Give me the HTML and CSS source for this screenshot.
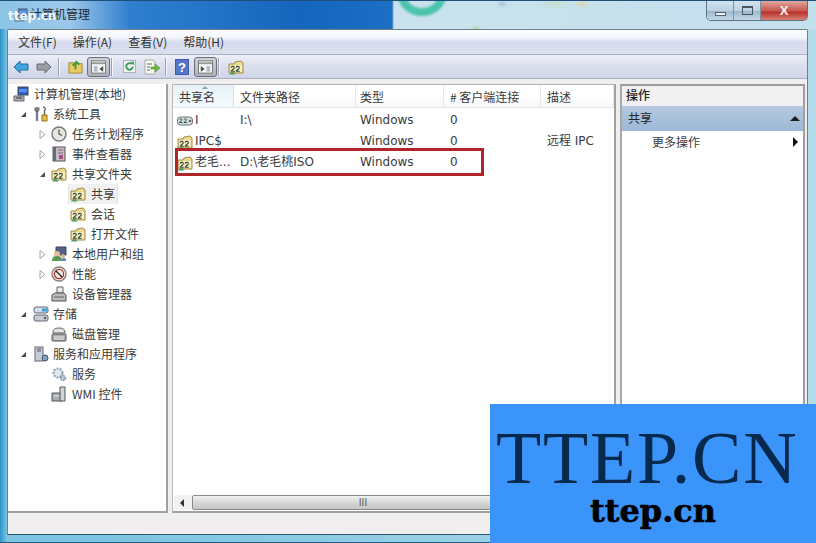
FILE: index.html
```html
<!DOCTYPE html>
<html lang="zh-CN">
<head>
<meta charset="utf-8">
<title>计算机管理</title>
<link rel="stylesheet" href="styles.css">
</head>
<body>
<svg class="defs" width="0" height="0" aria-hidden="true">
  <symbol id="share" viewBox="0 0 16 16">
    <path d="M1 5h5l1-2 6-1 2 2v10H1z" fill="#ecd890" stroke="#a58a45"/>
    <path d="M2 6h12v7H2z" fill="#f7ecc0"/>
    <path d="M3 8.500c1-1.800 3.500-1.300 3.300.400C6.100 10 3.800 11 3.300 12.300h3.500M8 8.500c1-1.800 3.500-1.300 3.300.400-.2 1.100-2.500 2.100-3 3.400h3.500" fill="none" stroke="#35483c" stroke-width="1.100"/>
    <path d="M1 15.500l3.500-3.500 3 3.500z" fill="#4f9c68"/>
  </symbol>
  <symbol id="drive" viewBox="0 0 16 16">
    <rect x="0.500" y="4" width="15" height="8" rx="3" fill="#d8dce0" stroke="#6f7478"/>
    <path d="M2.500 6.500c1-1 2.500-.8 2.500.300 0 1-2.300 1.500-2.500 2.700H5.500M7 6.500c1-1 2.500-.8 2.500.300 0 1-2.300 1.500-2.500 2.700h3" fill="none" stroke="#2f5f46"/>
    <circle cx="13" cy="8" r="1.300" fill="#666"/>
  </symbol>
  <symbol id="computer" viewBox="0 0 16 16">
    <path d="M1 10h10v5H1z" fill="#aab0b8" stroke="#666"/>
    <rect x="5" y="1" width="10" height="8" fill="#2f5fc0" stroke="#445"/>
    <path d="M6 3h8v3H6z" fill="#5b8ee8"/>
    <path d="M3 12h6" stroke="#333"/>
  </symbol>
  <symbol id="tools" viewBox="0 0 16 16">
    <path d="M4 1v14" stroke="#7b8088" stroke-width="2.400"/>
    <path d="M2 1.500c0 3 1 4 2 4s2-1 2-4" fill="none" stroke="#5c6066" stroke-width="1.200"/>
    <path d="M10 1c2 0 3 2 1.500 4v4" fill="none" stroke="#666" stroke-width="1.400"/>
    <path d="M9 9h5v6H9z" fill="#e9c23a" stroke="#8a7020"/>
  </symbol>
  <symbol id="clock" viewBox="0 0 16 16">
    <circle cx="8" cy="8" r="7" fill="#e6e6e0" stroke="#77797c" stroke-width="1.400"/>
    <path d="M8 3.500V8l3 1.500" fill="none" stroke="#444" stroke-width="1.100"/>
  </symbol>
  <symbol id="log" viewBox="0 0 16 16">
    <rect x="2" y="1" width="12" height="14" fill="#c9bcc0" stroke="#555"/>
    <path d="M2 1h3v14H2z" fill="#5f6e84"/>
    <path d="M7 4h5M7 7h5" stroke="#7b6a70"/>
    <rect x="8" y="9" width="4" height="4" fill="#b04a8a"/>
  </symbol>
  <symbol id="users" viewBox="0 0 16 16">
    <path d="M5 1h10v8H5z" fill="#54628a" stroke="#3a4258"/>
    <circle cx="6" cy="8" r="3" fill="#e4be96"/>
    <path d="M1 15c0-4 2-5 5-5s5 1 5 5z" fill="#5c9a56"/>
    <circle cx="12" cy="10" r="2" fill="#d8b08a"/>
    <path d="M10 15c0-2 1-3 3-3s2 1 2 3z" fill="#6684c4"/>
  </symbol>
  <symbol id="perf" viewBox="0 0 16 16">
    <circle cx="8" cy="8" r="7" fill="#f1ece6" stroke="#8a7c78" stroke-width="1.400"/>
    <circle cx="8" cy="8" r="4.600" fill="none" stroke="#a8322c" stroke-width="1.200"/>
    <path d="M5 5l6 6" stroke="#222" stroke-width="1.200"/>
  </symbol>
  <symbol id="device" viewBox="0 0 16 16">
    <path d="M6 1h6v6H6z" fill="#e8eaec" stroke="#666"/>
    <path d="M1 9l3-2h9l2 2v6H1z" fill="#b8bcc0" stroke="#555"/>
    <path d="M3 11h10" stroke="#666"/>
  </symbol>
  <symbol id="storage" viewBox="0 0 16 16">
    <rect x="1" y="1" width="14" height="6" rx="2" fill="#cfe0ea" stroke="#667"/>
    <rect x="9" y="2.500" width="5" height="3" fill="#3aa0d8"/>
    <rect x="1" y="9" width="14" height="6" rx="2" fill="#c8ccd0" stroke="#667"/>
    <circle cx="12" cy="12" r="1.200" fill="#555"/>
  </symbol>
  <symbol id="disk" viewBox="0 0 16 16">
    <path d="M2 6c0-3 3-4 6-4s6 1 6 4v1H2z" fill="#dfe1e3" stroke="#666"/>
    <rect x="1" y="8" width="14" height="7" rx="1" fill="#a8acb0" stroke="#555"/>
    <path d="M3 11h10M3 13h10" stroke="#e8e8e8"/>
  </symbol>
  <symbol id="server" viewBox="0 0 16 16">
    <rect x="2" y="1" width="8" height="14" fill="#c8ccd4" stroke="#667"/>
    <path d="M4 3h4M4 5h4" stroke="#556"/>
    <circle cx="12" cy="12" r="3" fill="#7ea4c8" stroke="#456"/>
  </symbol>
  <symbol id="gear" viewBox="0 0 16 16">
    <circle cx="7" cy="7" r="4.500" fill="#dfe8ef" stroke="#8aa0b0" stroke-width="2" stroke-dasharray="2 1.200"/>
    <circle cx="12" cy="12" r="2.600" fill="#b8c4cc" stroke="#667" stroke-dasharray="1.500 1"/>
  </symbol>
  <symbol id="wmi" viewBox="0 0 16 16">
    <path d="M1 7h10v8H1z" fill="#a8acb0" stroke="#555"/>
    <path d="M9 1h5v14H9z" fill="#d0d4d8" stroke="#555"/>
    <path d="M3 10h5" stroke="#eee"/>
  </symbol>
  <symbol id="arrow-open" viewBox="0 0 7 7"><path d="M6 1v5H1z" fill="#4c4c4c"/></symbol>
  <symbol id="arrow-closed" viewBox="0 0 7 9"><path d="M1 .5l5 4-5 4z" fill="#fff" stroke="#a6a6a6"/></symbol>
</svg>

<div class="window">
  <header class="titlebar">
    <svg class="title-icon"><use href="#computer"/></svg>
    <span class="title-text">计算机管理</span>
    <div class="blur-strip"><span class="teal"></span></div>
    <div class="caption">
      <button class="cap cap-min"><i></i></button>
      <button class="cap cap-max"><i></i></button>
      <button class="cap cap-close">X</button>
    </div>
  </header>

  <div class="client">
    <nav class="menubar">
      <span>文件(F)</span><span>操作(A)</span><span>查看(V)</span><span>帮助(H)</span>
    </nav>
    <div class="toolbar">
      <svg class="tb tb-nav" viewBox="0 0 16 14"><path d="M1 7l6-6v3h8v6H7v3z" fill="#3fa6e0" stroke="#1f6f9f"/></svg>
      <svg class="tb tb-nav" viewBox="0 0 16 14"><path d="M15 7L9 1v3H1v6h8v3z" fill="#9a9ea2" stroke="#6a6e72"/></svg>
      <i class="sep"></i>
      <svg class="tb tb-up" viewBox="0 0 16 16"><path d="M1 4h5l1 1h8v10H1z" fill="#e9c95e" stroke="#a4862f"/><path d="M8 11V5M5 7l4-4 3 3" fill="none" stroke="#3c9a3c" stroke-width="2"/></svg>
      <span class="tb-box"><svg viewBox="0 0 16 14"><rect x=".5" y=".5" width="15" height="13" fill="#f6f6f6" stroke="#777"/><path d="M1 3h14" stroke="#999" stroke-width="2"/><path d="M3 6h4v6H3z" fill="#b8bec6"/><path d="M13 6v6l-4-3z" fill="#444"/></svg></span>
      <i class="sep"></i>
      <svg class="tb tb-refresh" viewBox="0 0 16 16"><rect x="1.500" y="1.500" width="13" height="13" fill="#eef3ee" stroke="#aab"/><path d="M11.500 8a3.500 3.500 0 1 1-1-2.500" fill="none" stroke="#3c9a5c" stroke-width="2"/><path d="M9 3h4v4z" fill="#3c9a5c"/></svg>
      <svg class="tb tb-export" viewBox="0 0 17 16"><path d="M2 1h8l2 2v12H2z" fill="#f7f7ee" stroke="#aaa"/><path d="M4 5h5M4 8h3M4 11h3" stroke="#667"/><path d="M8 8h4V5l5 4-5 4v-3H8z" fill="#6cb83c" stroke="#3f8a20" stroke-width=".5"/></svg>
      <i class="sep"></i>
      <svg class="tb tb-help" viewBox="0 0 14 16"><rect width="14" height="16" fill="#3a5ab0"/><rect x="1" y="1" width="12" height="14" fill="#5576c8"/><text x="7" y="13" class="help-mark">?</text></svg>
      <span class="tb-box tb-box-2"><svg viewBox="0 0 16 14"><rect x=".5" y=".5" width="15" height="13" fill="#f6f6f6" stroke="#777"/><path d="M1 3h14" stroke="#999" stroke-width="2"/><path d="M9 6h4v6H9z" fill="#b8bec6"/><path d="M3 6v6l4-3z" fill="#444"/></svg></span>
      <i class="sep"></i>
      <svg class="tb tb-share"><use href="#share"/></svg>
    </div>

    <main class="panes">
      <aside class="tree">
        <div class="node l0"><b class="tw"></b><svg class="ic"><use href="#computer"/></svg><span>计算机管理(本地)</span></div>
        <div class="node l1"><svg class="tw"><use href="#arrow-open"/></svg><svg class="ic"><use href="#tools"/></svg><span>系统工具</span></div>
        <div class="node l2"><svg class="tw tw-c"><use href="#arrow-closed"/></svg><svg class="ic"><use href="#clock"/></svg><span>任务计划程序</span></div>
        <div class="node l2"><svg class="tw tw-c"><use href="#arrow-closed"/></svg><svg class="ic"><use href="#log"/></svg><span>事件查看器</span></div>
        <div class="node l2"><svg class="tw"><use href="#arrow-open"/></svg><svg class="ic"><use href="#share"/></svg><span>共享文件夹</span></div>
        <div class="node l3"><div class="sel"><svg class="ic"><use href="#share"/></svg><span>共享</span></div></div>
        <div class="node l3"><div class="nosel"><svg class="ic"><use href="#share"/></svg><span>会话</span></div></div>
        <div class="node l3"><div class="nosel"><svg class="ic"><use href="#share"/></svg><span>打开文件</span></div></div>
        <div class="node l2"><svg class="tw tw-c"><use href="#arrow-closed"/></svg><svg class="ic"><use href="#users"/></svg><span>本地用户和组</span></div>
        <div class="node l2"><svg class="tw tw-c"><use href="#arrow-closed"/></svg><svg class="ic"><use href="#perf"/></svg><span>性能</span></div>
        <div class="node l2"><b class="tw"></b><svg class="ic"><use href="#device"/></svg><span>设备管理器</span></div>
        <div class="node l1"><svg class="tw"><use href="#arrow-open"/></svg><svg class="ic"><use href="#storage"/></svg><span>存储</span></div>
        <div class="node l2"><b class="tw"></b><svg class="ic"><use href="#disk"/></svg><span>磁盘管理</span></div>
        <div class="node l1"><svg class="tw"><use href="#arrow-open"/></svg><svg class="ic"><use href="#server"/></svg><span>服务和应用程序</span></div>
        <div class="node l2"><b class="tw"></b><svg class="ic"><use href="#gear"/></svg><span>服务</span></div>
        <div class="node l2"><b class="tw"></b><svg class="ic"><use href="#wmi"/></svg><span>WMI 控件</span></div>
      </aside>

      <section class="list">
        <div class="row head">
          <div class="c c1 sorted">共享名<i class="sort"></i></div>
          <div class="c c2">文件夹路径</div>
          <div class="c c3">类型</div>
          <div class="c c4"># 客户端连接</div>
          <div class="c c5">描述</div>
        </div>
        <div class="rows">
          <div class="row item"><div class="c c1"><svg class="ic"><use href="#drive"/></svg>I</div><div class="c c2">I:\</div><div class="c c3">Windows</div><div class="c c4">0</div><div class="c c5"></div></div>
          <div class="row item"><div class="c c1"><svg class="ic"><use href="#share"/></svg>IPC$</div><div class="c c2"></div><div class="c c3">Windows</div><div class="c c4">0</div><div class="c c5">远程 IPC</div></div>
          <div class="row item"><div class="c c1"><svg class="ic"><use href="#share"/></svg>老毛...</div><div class="c c2">D:\老毛桃ISO</div><div class="c c3">Windows</div><div class="c c4">0</div><div class="c c5"></div></div>
          <div class="redbox"></div>
        </div>
        <div class="hscroll">
          <span class="sb-left"></span>
          <div class="sb-thumb"><span>III</span></div>
        </div>
      </section>

      <aside class="actions">
        <div class="act-head">操作</div>
        <div class="act-sec">共享<i class="up"></i></div>
        <div class="act-item">更多操作<i class="more"></i></div>
      </aside>
    </main>
    <footer class="status"></footer>
  </div>
</div>

<div class="wm-top">ttep.cn</div>
<div class="banner">
  <div class="b-big">TTEP.CN</div>
  <div class="b-small">ttep.cn</div>
</div>
</body>
</html>
```
FILE: styles.css
```css
* { box-sizing: border-box; }
html, body { margin: 0; padding: 0; }
body {
  width: 816px; height: 543px; overflow: hidden; position: relative;
  font: 12px/20px "DejaVu Sans", "Noto Sans CJK SC", sans-serif;
  color: #3a3a3a; background: #fff;
}
.defs { position: absolute; }
svg { display: block; flex: none; }

.window {
  width: 816px; height: 543px; display: flex; flex-direction: column;
  padding: 0 8px 7px 7px;
  background: linear-gradient(90deg, #2f93c9 0, #58b0d8 4px, #7cc4e2 7px, #7cc4e2 100px, #b4dbe9 808px);
  border-bottom: 1px solid #1f5f80;
}
.titlebar {
  height: 29px; flex: none; margin: 0 -8px 0 -7px; padding-left: 14px;
  display: flex; align-items: center; position: relative;
  background: linear-gradient(90deg, #8cc4e6 0, #9cc8ea 70px, #2f7fd0 130px, #1565bd 300px, #1b6fc4 392px, #c9e2ee 394px, #c4e0ec 816px);
  border-top: 1px solid #1d4f78;
}
.title-icon { width: 14px; height: 14px; margin-right: 2px; opacity: .75; }
.title-text { font-size: 12px; color: #202a38; margin-top: -1px; }
.blur-strip {
  position: absolute; left: 392px; right: 116px; top: 0; height: 28px; overflow: hidden;
  background:
    radial-gradient(ellipse 16px 5px at 163px 3px, #c4e0c8, transparent),
    radial-gradient(ellipse 8px 4px at 190px 3px, #e0d4b0, transparent),
    radial-gradient(ellipse 6px 4px at 110px 3px, #a8c4dc, transparent),
    radial-gradient(ellipse 5px 3px at 84px 27px, #b4d8a4, transparent);
}
.teal {
  display: block; width: 48px; height: 42px; margin: -27px 0 0 6px;
  border: 8px solid #4cc3ab; border-radius: 50%; filter: blur(1px);
}
.caption { position: absolute; right: 8px; top: 0; height: 20px; display: flex; border: 1px solid #5d7185; border-top: 0; border-radius: 0 0 5px 5px; overflow: hidden; }
.cap { width: 27px; height: 19px; padding: 0; border: 0; border-right: 1px solid #7f93a6; background: linear-gradient(#cfe2ee, #bcd2e2 50%, #9eb8cc 55%, #c4d8e6); display: flex; align-items: center; justify-content: center; }
.cap-close { width: 46px; border: 0; background: linear-gradient(#e0a8a0, #c95a50 50%, #b8342c 60%, #d88076); color: #f4f4f4; font: bold 13px/19px "Liberation Sans", sans-serif; }
.cap-min i { display: block; width: 11px; height: 4px; margin-top: 6px; border: 1px solid #5a6470; background: #e8eef4; }
.cap-max i { display: block; width: 11px; height: 9px; border: 1px solid #4a5460; border-top-width: 2px; }

.client {
  flex: 1; min-height: 0; display: flex; flex-direction: column;
  background: #d5dbee; border: 1px solid #6f8088; border-bottom-color: #2e5a70;
  border-radius: 2px 2px 0 0;
}
.menubar {
  height: 25px; flex: none; display: flex; gap: 16px; padding: 1px 0 0 10px;
  background: linear-gradient(#fbfcfe 0, #f3f5fb 8px, #d6dcee 12px, #dbe0f0 100%);
  border-bottom: 1px solid #a9b0c0; line-height: 21px; color: #333;
  font-family: "Noto Sans CJK SC", sans-serif;
}
.toolbar {
  height: 24px; flex: none; display: flex; align-items: center; padding-left: 5px;
  background: linear-gradient(#eef0f8, #dde1f0 40%, #cfd4e8);
  border-bottom: 1px solid #a9b0c0;
}
.tb-nav { width: 16px; height: 14px; margin-right: 7px; }
.sep { width: 1px; height: 18px; background: #9aa2b2; box-shadow: 1px 0 #f6f7fb; flex: none; }
.toolbar > .sep { margin: 0 9px 0 -1px; }
.tb-nav + .sep { margin-left: -1px; }
.tb-up { width: 15px; height: 15px; margin-right: 4px; }
.tb-box { width: 23px; height: 20px; padding: 2px 3px; border: 1px solid #6c7078; border-radius: 3px; background: linear-gradient(#ccd0d8, #aeb2ba); margin-right: 2px; }
.tb-box svg { width: 15px; height: 14px; }
.tb-refresh { width: 15px; height: 15px; margin: 0 6px 0 1px; }
.tb-export { width: 17px; height: 16px; margin-right: 6px; }
.tb-help { width: 14px; height: 16px; margin-right: 5px; }
.help-mark { font: bold 13px "Liberation Sans", sans-serif; fill: #fff; text-anchor: middle; }
.tb-share { width: 16px; height: 16px; }

.panes {
  flex: 1; min-height: 0; display: flex; gap: 4px; padding-top: 5px;
  background: #f0eeee;
}
.tree { width: 160px; background: #fff; border-right: 2px solid #a0a0a0; border-bottom: 2px solid #a0a0a0; font-family: "Noto Sans CJK SC", sans-serif; }
.node { height: 20px; display: flex; align-items: center; white-space: nowrap; }
.ic { width: 16px; height: 16px; margin-right: 5px; }
.tw { width: 7px; height: 7px; margin-right: 5px; flex: none; display: block; }
.tw-c { height: 9px; }
.l0 .tw { width: 5px; margin-right: 0; }
.l1 { padding-left: 12px; }
.l1 .tw { margin-right: 6px; }
.l1 .ic { margin-right: 4px; }
.l2 { padding-left: 31px; }
.l3 { padding-left: 60px; }
.sel, .nosel { height: 20px; display: flex; align-items: center; padding: 0 3px 0 2px; }
.sel { background: #f1f1f1; box-shadow: inset 1px 0 #e4e4e4, inset -1px 0 #e4e4e4; }

.list { width: 444px; display: flex; flex-direction: column; background: #fff; border-top: 1px solid #b0b0b0; border-left: 1px solid #bbb; border-right: 2px solid #a0a0a0; border-bottom: 2px solid #a0a0a0; }
.row { display: grid; grid-template-columns: 61px 122px 88px 97px 1fr; }
.head { height: 23px; flex: none; border-bottom: 1px solid #e2e6ea; font-family: "Noto Sans CJK SC", sans-serif; }
.head .c { padding-left: 6px; line-height: 23px; border-right: 1px solid #e6eaee; position: relative; background: linear-gradient(#fff, #fff 50%, #f6f8fa); }
.head .sorted { background: linear-gradient(#e6f1f8, #f4fafc); border-right-color: #cfe0ea; }
.head .c3 { padding-left: 4px; }
.sort { position: absolute; left: 29px; top: 1px; border: 3px solid transparent; border-top: 0; border-bottom: 3px solid #8aa0b0; }
.rows { flex: 1; min-height: 0; position: relative; padding-top: 2px; }
.item { height: 21px; line-height: 21px; }
.item .c { padding-left: 6px; white-space: nowrap; display: flex; align-items: center; }
.item .c1 { padding-left: 4px; }
.item .c3 { padding-left: 4px; }
.item .ic { margin-right: 2px; }
.c { overflow: hidden; }
.redbox { position: absolute; left: 2px; top: 40px; width: 309px; height: 28px; border: 3px solid #b0252a; }
.hscroll { height: 15px; flex: none; margin-bottom: 1px; display: flex; align-items: stretch; padding-left: 1px; }
.sb-left { width: 18px; background: #f2f2f2; position: relative; }
.sb-left::after { content: ""; position: absolute; left: 6px; top: 4px; border: 4px solid transparent; border-left: 0; border-right: 4px solid #333; }
.sb-thumb { width: 342px; border: 1px solid #8a8a8a; border-radius: 2px; background: linear-gradient(#f2f2f2, #d8d8d8 50%, #c4c4c4); text-align: center; font: 10px/13px "Liberation Sans", sans-serif; color: #555; }

.actions { flex: 1; margin-right: 2px; background: #fff; border-top: 2px solid #9a9a9a; border-left: 2px solid #a8a8a8; border-right: 2px solid #a0a0a0; font-family: "Noto Sans CJK SC", sans-serif; }
.act-head { height: 20px; line-height: 18px; padding-left: 4px; background: #f1f1f1; font-weight: 500; color: #222; }
.act-sec { height: 25px; line-height: 24px; padding-left: 6px; position: relative; color: #222; background: linear-gradient(#b6c9df, #9cb8d6); }
.up { position: absolute; right: 3px; top: 10px; border: 5px solid transparent; border-top: 0; border-bottom: 5px solid #1c1c1c; }
.act-item { height: 22px; line-height: 22px; padding-left: 30px; position: relative; }
.more { position: absolute; right: 5px; top: 6px; border: 5px solid transparent; border-right: 0; border-left: 5px solid #111; }

.status { height: 21px; flex: none; background: #f0eeee; }

.wm-top { position: absolute; left: 8px; top: 6px; color: #f4f8fb; font: bold 12px/20px "DejaVu Sans", sans-serif; }
.banner { position: absolute; left: 490px; top: 404px; width: 326px; height: 139px; background: #3b94fa; }
.b-big { font: 74px/66px "Liberation Serif", serif; color: #06294d; margin: 21px 0 0 6px; letter-spacing: 1.800px; white-space: nowrap; }
.b-small { font: bold 32px/34px "DejaVu Serif", serif; color: #000; -webkit-text-stroke: .6px #000; margin: 3px 0 0; text-align: center; }
```
